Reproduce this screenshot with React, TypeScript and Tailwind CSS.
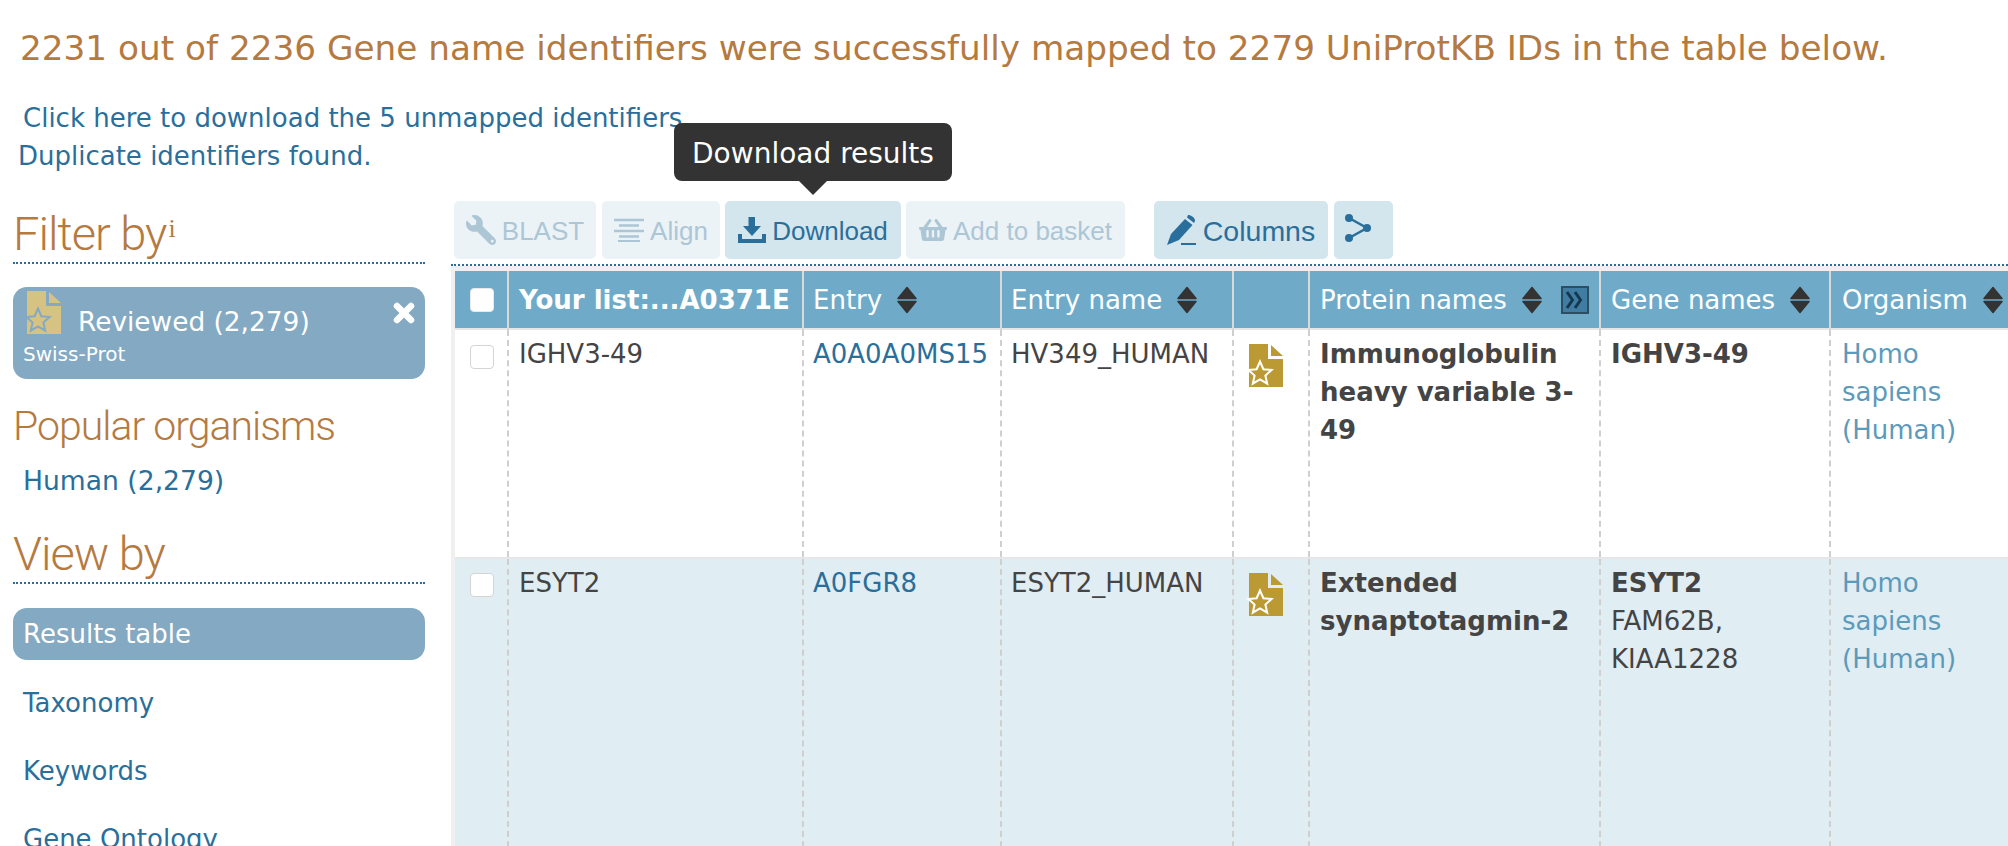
import React from "react";
import { FaWrench, FaShoppingBasket } from "react-icons/fa";

const LINK = "text-[#2a6f9b]";

function DocStar({ fill, stroke, back }: { fill: string; stroke: string; back?: string }) {
  return (
    <svg viewBox="0 0 34 43" width="34" height="43" className="overflow-visible block">
      <path d="M0 0H19V15H34V43H0Z" fill={fill} />
      <path d="M22 1L34 12H22Z" fill={fill} />
      <path
        d="M11 17.5L14.4 25.2L22.6 26L16.4 31.5L18.2 39.7L11 35.4L3.8 39.7L5.6 31.5L-0.6 26L7.6 25.2Z"
        fill={back ?? fill}
        stroke={stroke}
        strokeWidth="2"
      />
    </svg>
  );
}

function Sort() {
  return (
    <svg viewBox="0 0 20 28" width="20" height="28" className="block shrink-0">
      <path d="M10 1.5L19 12.5H1Z" fill="#333" stroke="#333" strokeWidth="1.5" strokeLinejoin="round" />
      <path d="M1 15.5H19L10 26.5Z" fill="#333" stroke="#333" strokeWidth="1.5" strokeLinejoin="round" />
    </svg>
  );
}

function Expand() {
  return (
    <svg viewBox="0 0 28 28" width="28" height="28" className="block shrink-0">
      <rect x="1" y="1" width="26" height="26" fill="#3f7da3" stroke="#2e4d63" strokeWidth="2" />
      <path d="M6 6L11.5 14L6 22M14 6L19.5 14L14 22" fill="none" stroke="#16384f" strokeWidth="3" />
    </svg>
  );
}

function ToolButton({ label, icon, active, w, big }: { label?: string; icon: React.ReactNode; active?: boolean; w: string; big?: boolean }) {
  return (
    <div
      className={`flex h-[58px] items-center justify-center gap-[6px] rounded-[5px] font-['Liberation_Sans',sans-serif] ${w} ${big ? "text-[28.5px]" : "text-[26px]"} ${
        active ? `bg-[#d3e5ed] ${LINK}` : "bg-[#ebf3f7] text-[#adc6d6]"
      }`}
    >
      {icon}
      {label && <span className="pt-[2px]">{label}</span>}
    </div>
  );
}

function Heading({ children, line, className }: { children: React.ReactNode; line?: boolean; className?: string }) {
  return (
    <h2
      className={`font-['Roboto',sans-serif] font-light tracking-[-1px] leading-[50px] text-[#b57a3f] ${
        line ? "border-b-2 border-dotted border-[#2a6f9b] pb-[3px] text-[47px]" : "text-[41px]"
      } ${className ?? ""}`}
    >
      {children}
    </h2>
  );
}

const th = "h-[58px] border-l-2 border-[#d9d9d9] px-[10px] text-left align-middle font-normal text-white";
const td = "border-l-2 border-dashed border-[#cfcfcf] px-[10px] pt-[5px] align-top";

function Check({ header }: { header?: boolean }) {
  return (
    <div
      className={`ml-[15px] h-[24px] w-[24px] rounded-[4px] border ${
        header ? "border-[#e8e8e8] bg-white" : "border-[#d4d4d4] bg-white"
      }`}
    />
  );
}

function HeadCell({ label, children }: { label: string; children?: React.ReactNode }) {
  return (
    <div className="flex items-center gap-[15px]">
      <span>{label}</span>
      <Sort />
      {children}
    </div>
  );
}

function Row({
  height,
  bg,
  check,
  list,
  entry,
  name,
  protein,
  gene,
  alt,
}: {
  height: string;
  bg: string;
  check: string;
  list: string;
  entry: string;
  name: string;
  protein: string;
  gene: string;
  alt?: string[];
}) {
  return (
    <tr className={`${height} ${bg} border-t-2 border-[#e6e6e6]`}>
      <td className="align-top">
        <div className={check}>
          <Check />
        </div>
      </td>
      <td className={td}>{list}</td>
      <td className={`${td} pl-[9px]`}>
        <span className={LINK}>{entry}</span>
      </td>
      <td className={`${td} pl-[9px]`}>{name}</td>
      <td className={`${td} !pt-[14px] pl-[15px]`}>
        <DocStar fill="#bc9a33" stroke="#ffffff" />
      </td>
      <td className={`${td} font-bold`}>{protein}</td>
      <td className={td}>
        <div className="font-bold">{gene}</div>
        {alt?.map((a) => (
          <div key={a}>{a}</div>
        ))}
      </td>
      <td className={`${td} pl-[11px]`}>
        <span className="text-[#5c9abb]">Homo sapiens (Human)</span>
      </td>
    </tr>
  );
}

export default function App() {
  return (
    <div className="relative h-[846px] w-[2008px] overflow-hidden bg-white font-['DejaVu_Sans',sans-serif] text-[26px] leading-[38px] text-[#444444]">
      <div className="whitespace-nowrap pl-[20px] pt-[25px] text-[34.25px] leading-[46px] text-[#b57a3f]">
        2231 out of 2236 Gene name identifiers were successfully mapped to 2279 UniProtKB IDs in the table below.
      </div>
      <div className={`mt-[28px] pl-[23px] ${LINK}`}>Click here to download the 5 unmapped identifiers</div>
      <div className={`pl-[18px] ${LINK}`}>Duplicate identifiers found.</div>

      <div className="flex">
        <aside className="ml-[13px] w-[412px] shrink-0 pt-[34px]">
          <Heading line>
            Filter by<sup className="ml-[2px] font-['Liberation_Serif',serif] text-[26px] font-normal">i</sup>
          </Heading>
          <div className="relative mt-[23px] h-[92px] rounded-[14px] bg-[#84a9c2] text-white">
            <div className="absolute left-[14px] top-[4px]">
              <DocStar fill="#d6c384" stroke="#84a9c2" />
            </div>
            <div className="absolute left-[65px] top-[16px] text-[26.4px]">Reviewed (2,279)</div>
            <div className="absolute left-[10px] top-[54px] text-[20px] leading-[26px]">Swiss-Prot</div>
            <svg viewBox="0 0 22 22" width="22" height="22" className="absolute right-[10px] top-[15px]">
              <path d="M4 4L18 18M18 4L4 18" stroke="#fff" strokeWidth="6.5" strokeLinecap="round" />
            </svg>
          </div>
          <Heading className="mt-[22px]">Popular organisms</Heading>
          <div className={`mt-[11px] pl-[10px] text-[26.6px] ${LINK}`}>Human (2,279)</div>
          <Heading line className="mt-[29px]">View by</Heading>
          <div className="mt-[24px] flex h-[52px] items-center rounded-[14px] bg-[#84a9c2] pl-[10px] text-white">Results table</div>
          <div className={`mt-[24px] pl-[10px] ${LINK}`}>Taxonomy</div>
          <div className={`mt-[30px] pl-[10px] ${LINK}`}>Keywords</div>
          <div className={`mt-[30px] pl-[10px] ${LINK}`}>Gene Ontology</div>
        </aside>

        <main className="ml-[26px] min-w-0 flex-1 pt-[26px]">
          <div className="flex pl-[3px]">
            <ToolButton w="w-[142px]" label="BLAST" icon={<FaWrench size={30} color="#adc6d6" className="-scale-x-100" />} />
            <div className="ml-[6px]">
              <ToolButton
                w="w-[118px]"
                label="Align"
                icon={
                  <svg viewBox="0 0 30 24" width="30" height="24">
                    <path d="M0 2H30M5 7.5H25M0 13H30M5 18.5H25" stroke="#adc6d6" strokeWidth="2.5" />
                    <path d="M4 23H26" stroke="#adc6d6" strokeWidth="2" />
                  </svg>
                }
              />
            </div>
            <div className="ml-[5px]">
              <ToolButton
                active
                w="w-[176px]"
                label="Download"
                icon={
                  <svg viewBox="0 0 28 26" width="28" height="26">
                    <path d="M10.5 0H17V9H23L14 19L5 9H10.5Z" fill="#2a6f9b" />
                    <path d="M0 17H4V22H24V17H28V26H0Z" fill="#2a6f9b" />
                  </svg>
                }
              />
            </div>
            <div className="ml-[5px]">
              <ToolButton w="w-[219px]" label="Add to basket" icon={<FaShoppingBasket size={28} color="#adc6d6" />} />
            </div>
            <div className="ml-[29px]">
              <ToolButton
                active
                big
                w="w-[174px]"
                label="Columns"
                icon={
                  <svg viewBox="0 0 30 30" width="30" height="30">
                    <path d="M21 0C24 0 28 2.5 28 6L27 8L20 2.5Z" fill="#2a6f9b" />
                    <path d="M18 4L25.5 10L12 25L0 30L4 19Z" fill="#2a6f9b" />
                    <path d="M14 29H29" stroke="#2a6f9b" strokeWidth="2" />
                  </svg>
                }
              />
            </div>
            <div className="ml-[6px]">
              <ToolButton
                active
                w="w-[59px]"
                icon={
                  <svg viewBox="0 0 28 28" width="28" height="28" className="mr-[12px] mb-[4px]">
                    <path d="M5 4L23 14L5 24" fill="none" stroke="#2a6f9b" strokeWidth="2.5" />
                    <circle cx="5" cy="4" r="4" fill="#2a6f9b" />
                    <circle cx="23" cy="14" r="4" fill="#2a6f9b" />
                    <circle cx="5" cy="24" r="4" fill="#2a6f9b" />
                  </svg>
                }
              />
            </div>
          </div>

          <div className="mt-[5px] border-b-2 border-dotted border-[#2a6f9b]" />

          <div className="bg-[#f0f0f0] pl-[4px] pt-[5px]">
            <table className="w-[1553px] table-fixed border-collapse">
              <colgroup>
                <col className="w-[53px]" />
                <col className="w-[295px]" />
                <col className="w-[198px]" />
                <col className="w-[232px]" />
                <col className="w-[76px]" />
                <col className="w-[291px]" />
                <col className="w-[230px]" />
                <col className="w-[178px]" />
              </colgroup>
              <thead>
                <tr className="bg-[#6fabc9]">
                  <th className="h-[58px] align-middle">
                    <Check header />
                  </th>
                  <th className={`${th} !font-bold`}>
                    <span className="whitespace-nowrap">Your list:...A0371E</span>
                  </th>
                  <th className={`${th} pl-[9px]`}>
                    <HeadCell label="Entry" />
                  </th>
                  <th className={`${th} pl-[9px]`}>
                    <HeadCell label="Entry name" />
                  </th>
                  <th className={th} />
                  <th className={th}>
                    <HeadCell label="Protein names">
                      <div className="ml-[4px]">
                        <Expand />
                      </div>
                    </HeadCell>
                  </th>
                  <th className={th}>
                    <HeadCell label="Gene names" />
                  </th>
                  <th className={`${th} pl-[11px]`}>
                    <HeadCell label="Organism" />
                  </th>
                </tr>
              </thead>
              <tbody>
                <Row
                  height="h-[229px]"
                  bg="bg-white"
                  check="pt-[15px]"
                  list="IGHV3-49"
                  entry="A0A0A0MS15"
                  name="HV349_HUMAN"
                  protein="Immunoglobulin heavy variable 3-49"
                  gene="IGHV3-49"
                />
                <Row
                  height="h-[400px]"
                  bg="bg-[#e0edf3]"
                  check="pt-[14px]"
                  list="ESYT2"
                  entry="A0FGR8"
                  name="ESYT2_HUMAN"
                  protein="Extended synaptotagmin-2"
                  gene="ESYT2"
                  alt={["FAM62B,", "KIAA1228"]}
                />
              </tbody>
            </table>
          </div>
        </main>
      </div>

      <div className="absolute left-[674px] top-[123px] flex h-[58px] w-[278px] items-center justify-center rounded-[8px] bg-[#333333] pt-[3px] text-[28px] text-white">
        Download results
        <div className="absolute left-[125px] top-[58px] h-0 w-0 border-x-[14px] border-t-[14px] border-x-transparent border-t-[#333333]" />
      </div>
    </div>
  );
}
